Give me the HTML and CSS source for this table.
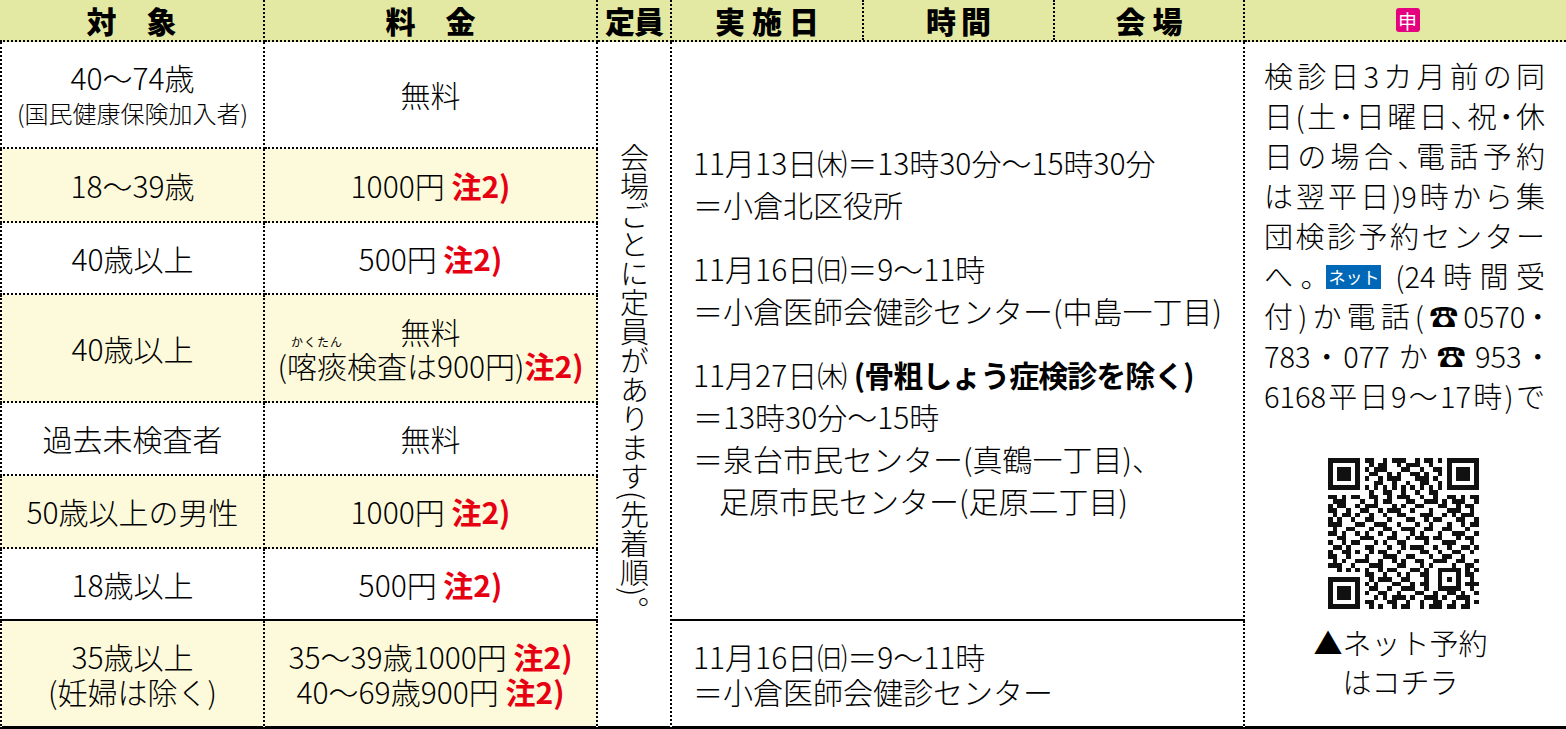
FILE: index.html
```html
<!DOCTYPE html>
<html lang="ja">
<head>
<meta charset="utf-8">
<title>検診一覧</title>
<link rel="stylesheet" href="styles.css">
</head>
<body>
<div class="table">
  <div class="vcol"><p class="vtext">会場ごとに定員があります(先着順)。</p></div>
  <div class="dates">
    <div class="grp">
      <p>11月13日㈭＝13時30分〜15時30分</p>
      <p>＝小倉北区役所</p>
    </div>
    <div class="grp">
      <p>11月16日㈰＝9〜11時</p>
      <p>＝小倉医師会健診センター(中島一丁目)</p>
    </div>
    <div class="grp">
      <p>11月27日㈭ <b>(骨粗しょう症検診を除く)</b></p>
      <p>＝13時30分〜15時</p>
      <p>＝泉台市民センター(真鶴一丁目)、</p>
      <p class="ind">足原市民センター(足原二丁目)</p>
    </div>
  </div>
  <div class="dates2">
    <p>11月16日㈰＝9〜11時</p>
    <p>＝小倉医師会健診センター</p>
  </div>
  <div class="apply">
    <div class="ln">検診日3カ月前の同</div>
    <div class="ln">日(土<span class="h">・</span>日曜日<span class="h">、</span>祝<span class="h">・</span>休</div>
    <div class="ln">日の場合<span class="h">、</span>電話予約</div>
    <div class="ln">は翌平日)9時から集</div>
    <div class="ln">団検診予約センター</div>
    <div class="ln">へ<span class="h">。</span><span class="net">ネット</span> (24時間受</div>
    <div class="ln">付)か電話(☎0570<span class="h">・</span></div>
    <div class="ln">783<span class="h">・</span>077か☎953<span class="h">・</span></div>
    <div class="ln">6168平日9〜17時)で</div>
    <div class="qr">
      <svg width="151" height="151" viewBox="0 0 33 33" shape-rendering="crispEdges">
        <path fill="none" stroke="#111" stroke-width="1" d="M0 .5h7M8 .5h2M12 .5h1M14 .5h3M19 .5h1M21 .5h2M24 .5h1M26 .5h7
M0 1.5h1M6 1.5h1M9 1.5h1M11 1.5h2M15 1.5h1M17 1.5h3M22 1.5h1M26 1.5h1M32 1.5h1
M0 2.5h1M2 2.5h3M6 2.5h1M8 2.5h1M10 2.5h3M16 2.5h2M20 2.5h1M23 2.5h2M26 2.5h1M28 2.5h3M32 2.5h1
M0 3.5h1M2 3.5h3M6 3.5h1M9 3.5h2M13 3.5h1M15 3.5h1M18 3.5h2M21 3.5h1M24 3.5h1M26 3.5h1M28 3.5h3M32 3.5h1
M0 4.5h1M2 4.5h3M6 4.5h1M8 4.5h1M11 4.5h1M13 4.5h3M19 4.5h3M23 4.5h1M26 4.5h1M28 4.5h3M32 4.5h1
M0 5.5h1M6 5.5h1M10 5.5h2M14 5.5h1M17 5.5h1M20 5.5h2M24 5.5h1M26 5.5h1M32 5.5h1
M0 6.5h7M8 6.5h1M10 6.5h1M12 6.5h1M14 6.5h1M16 6.5h1M18 6.5h1M20 6.5h1M22 6.5h1M24 6.5h1M26 6.5h7
M9 7.5h1M12 7.5h2M16 7.5h1M19 7.5h1M22 7.5h2
M0 8.5h2M3 8.5h1M5 8.5h2M9 8.5h2M13 8.5h1M15 8.5h3M20 8.5h1M23 8.5h1M26 8.5h2M29 8.5h1M31 8.5h2
M1 9.5h3M7 9.5h1M10 9.5h1M12 9.5h2M17 9.5h2M21 9.5h3M25 9.5h1M27 9.5h3M32 9.5h1
M0 10.5h1M2 10.5h2M6 10.5h1M8 10.5h3M14 10.5h1M16 10.5h1M19 10.5h2M24 10.5h2M28 10.5h1M30 10.5h2
M0 11.5h2M4 11.5h1M7 11.5h2M11 11.5h1M13 11.5h3M18 11.5h1M22 11.5h1M26 11.5h3M31 11.5h1
M1 12.5h1M3 12.5h2M6 12.5h1M9 12.5h1M12 12.5h1M15 12.5h2M20 12.5h3M25 12.5h1M27 12.5h1M29 12.5h3
M0 13.5h1M2 13.5h1M5 13.5h1M8 13.5h2M13 13.5h1M17 13.5h2M21 13.5h1M23 13.5h2M28 13.5h2M32 13.5h1
M0 14.5h3M6 14.5h2M10 14.5h3M15 14.5h1M19 14.5h1M22 14.5h1M26 14.5h1M29 14.5h1M31 14.5h2
M1 15.5h1M4 15.5h2M9 15.5h1M12 15.5h2M16 15.5h3M21 15.5h2M25 15.5h2M30 15.5h1
M0 16.5h2M3 16.5h1M6 16.5h1M8 16.5h1M11 16.5h1M14 16.5h1M18 16.5h1M20 16.5h1M24 16.5h1M27 16.5h3M32 16.5h1
M2 17.5h2M7 17.5h3M13 17.5h2M17 17.5h1M19 17.5h3M23 17.5h2M28 17.5h1M30 17.5h2
M0 18.5h1M3 18.5h1M5 18.5h2M10 18.5h1M12 18.5h1M15 18.5h2M21 18.5h1M25 18.5h3M31 18.5h1
M1 19.5h2M4 19.5h1M8 19.5h2M13 19.5h1M16 19.5h1M18 19.5h3M23 19.5h1M26 19.5h1M29 19.5h2M32 19.5h1
M0 20.5h1M3 20.5h2M6 20.5h1M9 20.5h1M11 20.5h2M15 20.5h1M20 20.5h2M24 20.5h1M27 20.5h2M31 20.5h1
M0 21.5h2M4 21.5h1M8 21.5h1M12 21.5h3M17 21.5h2M22 21.5h1M25 21.5h2M29 21.5h1
M1 22.5h1M3 22.5h1M6 22.5h3M11 22.5h1M14 22.5h1M16 22.5h1M19 22.5h2M23 22.5h3M28 22.5h2M32 22.5h1
M0 23.5h3M5 23.5h1M9 23.5h3M15 23.5h2M20 23.5h1M22 23.5h1M27 23.5h1M30 23.5h2
M2 24.5h1M4 24.5h1M6 24.5h1M8 24.5h1M11 24.5h1M13 24.5h2M18 24.5h2M21 24.5h1M24 24.5h5M30 24.5h1M32 24.5h1
M8 25.5h2M12 25.5h1M15 25.5h1M17 25.5h1M20 25.5h2M24 25.5h1M28 25.5h1M30 25.5h2
M0 26.5h7M9 26.5h1M11 26.5h3M16 26.5h2M21 26.5h1M24 26.5h1M26 26.5h1M28 26.5h1M31 26.5h1
M0 27.5h1M6 27.5h1M8 27.5h1M10 27.5h1M14 27.5h2M18 27.5h1M20 27.5h2M24 27.5h1M28 27.5h1M30 27.5h3
M0 28.5h1M2 28.5h3M6 28.5h1M9 28.5h2M13 28.5h1M16 28.5h3M21 28.5h1M24 28.5h5M31 28.5h1
M0 29.5h1M2 29.5h3M6 29.5h1M8 29.5h1M11 29.5h2M15 29.5h1M19 29.5h2M23 29.5h1M26 29.5h2M29 29.5h1M32 29.5h1
M0 30.5h1M2 30.5h3M6 30.5h1M10 30.5h1M12 30.5h1M14 30.5h3M18 30.5h1M21 30.5h3M25 30.5h1M28 30.5h3
M0 31.5h1M6 31.5h1M8 31.5h2M13 31.5h2M17 31.5h1M20 31.5h1M23 31.5h2M27 31.5h1M30 31.5h1M32 31.5h1
M0 32.5h7M9 32.5h1M11 32.5h1M14 32.5h1M16 32.5h2M20 32.5h1M22 32.5h3M26 32.5h2M29 32.5h2"/>
      </svg>
    </div>
    <div class="cap">
      <p>▲ネット予約</p>
      <p>はコチラ</p>
    </div>
  </div>

  <div class="th">対　象</div>
  <div class="th">料　金</div>
  <div class="th th3">定員</div>
  <div class="th th4"><span class="s1">実施日</span><span class="s2">時間</span><span class="s3">会場</span></div>
  <div class="th th5"><span class="mo">申</span></div>

  <div class="td c1"><div><p>40〜74歳</p><p class="sm">(国民健康保険加入者)</p></div></div>
  <div class="td"><p>無料</p></div>

  <div class="td c1 y"><p>18〜39歳</p></div>
  <div class="td y"><p>1000円 <span class="n">注2)</span></p></div>

  <div class="td c1"><p>40歳以上</p></div>
  <div class="td"><p>500円 <span class="n">注2)</span></p></div>

  <div class="td c1 y"><p>40歳以上</p></div>
  <div class="td y tw"><div><p>無料</p><p>(<span class="rb">喀痰<span class="rt">かくたん</span></span>検査は900円)<span class="n">注2)</span></p></div></div>

  <div class="td c1"><p>過去未検査者</p></div>
  <div class="td"><p>無料</p></div>

  <div class="td c1 y"><p>50歳以上の男性</p></div>
  <div class="td y"><p>1000円 <span class="n">注2)</span></p></div>

  <div class="td c1 r7"><p>18歳以上</p></div>
  <div class="td r7"><p>500円 <span class="n">注2)</span></p></div>

  <div class="td c1 y r8"><div><p>35歳以上</p><p>(妊婦は除く)</p></div></div>
  <div class="td y r8"><div><p>35〜39歳1000円 <span class="n">注2)</span></p><p>40〜69歳900円 <span class="n">注2)</span></p></div></div>
</div>
</body>
</html>
```

FILE: styles.css
```css
* { box-sizing: border-box; margin: 0; padding: 0; }
html, body { width: 1566px; height: 729px; overflow: hidden; background: #fff; }
body {
  font-family: "Noto Sans CJK JP", "Noto Sans", sans-serif;
  font-weight: 300;
  color: #000;
}
.table {
  display: grid;
  grid-template-columns: 265px 333px 74px 573px 321px;
  grid-template-rows: 42px 107px 74px 72px 108px 73px 73px 72px 108px;
}

/* header */
.th {
  background: #e3e9a3;
  border-bottom: 2px dotted #000;
  border-right: 2px dotted #000;
  display: flex;
  align-items: center;
  justify-content: center;
  font-weight: 900;
  font-size: 30px;
  line-height: 1;
}
.th3 { font-size: 30px; letter-spacing: -1px; }
.th4 { justify-content: flex-start; }
.th4 span {
  height: 100%;
  display: flex;
  align-items: center;
  justify-content: center;
  letter-spacing: 7px;
  padding-left: 7px;
}
.th4 .s1 { width: 192px; border-right: 2px dotted #000; }
.th4 .s2 { width: 191px; border-right: 2px dotted #000; letter-spacing: 5px; padding-left: 5px; }
.th4 .s3 { flex: 1; }
.th5 { border-right: none; }
.mo {
  display: inline-flex;
  width: 24px;
  height: 24px;
  align-items: center;
  justify-content: center;
  background: #e4007f;
  color: #fff;
  border-radius: 3px;
  font-size: 19px;
  font-weight: 400;
  margin-left: 4px;
}

/* body cells */
.td {
  display: flex;
  align-items: center;
  justify-content: center;
  text-align: center;
  border-right: 2px dotted #000;
  border-bottom: 2px dotted #000;
  font-size: 30px;
  line-height: 35px;
  white-space: nowrap;
}
.td.c1 { border-left: 2px dotted #000; }
.td.y { background: #fdfadb; }
.td.r7 { border-bottom: 2px solid #000; }
.td.r8 { border-bottom: 3px solid #000; }
.td .sm { font-size: 24px; }
.tw { line-height: 34px; }
.n { color: #e60012; font-weight: 700; }
.rb { position: relative; }
.rt {
  position: absolute;
  left: 50%;
  top: -7px;
  transform: translateX(-50%);
  font-size: 12px;
  line-height: 12px;
  font-weight: 400;
  letter-spacing: 1px;
  white-space: nowrap;
}

/* vertical column */
.vcol {
  grid-column: 3;
  grid-row: 2 / 10;
  border-right: 2px dotted #000;
  border-bottom: 3px solid #000;
  display: flex;
  align-items: center;
  justify-content: center;
}
.vtext {
  writing-mode: vertical-rl;
  font-size: 29px;
  line-height: 1;
}

/* dates */
.dates {
  grid-column: 4;
  grid-row: 2 / 9;
  border-right: 2px dotted #000;
  border-bottom: 2px solid #000;
  display: flex;
  flex-direction: column;
  justify-content: center;
  padding-left: 21px;
  font-size: 30px;
  line-height: 42px;
  white-space: nowrap;
}
.dates .grp + .grp { margin-top: 22px; }
.dates b { font-weight: 700; letter-spacing: -1px; }
.dates .ind { padding-left: 26px; }
.dates2 {
  grid-column: 4;
  grid-row: 9;
  border-right: 2px dotted #000;
  border-bottom: 3px solid #000;
  display: flex;
  flex-direction: column;
  justify-content: center;
  padding-left: 21px;
  font-size: 30px;
  line-height: 35px;
  white-space: nowrap;
}

/* apply column */
.apply {
  grid-column: 5;
  grid-row: 2 / 10;
  border-bottom: 3px solid #000;
  padding: 13px 21px 0 19px;
  font-size: 29px;
  line-height: 40px;
}
.ln {
  text-align: justify;
  text-align-last: justify;
}
.h { font-feature-settings: "halt"; }
.net {
  display: inline-block;
  background: #0068b7;
  color: #fff;
  font-size: 17px;
  font-weight: 400;
  line-height: 24px;
  height: 24px;
  padding: 0 2px;
  vertical-align: 4px;
  margin-left: 4px;
}
.qr {
  display: flex;
  justify-content: center;
  margin-top: 43px;
  margin-left: -2px;
}
.qr svg { display: block; }
.cap {
  margin-top: 14px;
  text-align: center;
  font-size: 29px;
  line-height: 39px;
  margin-left: -8px;
}
```
